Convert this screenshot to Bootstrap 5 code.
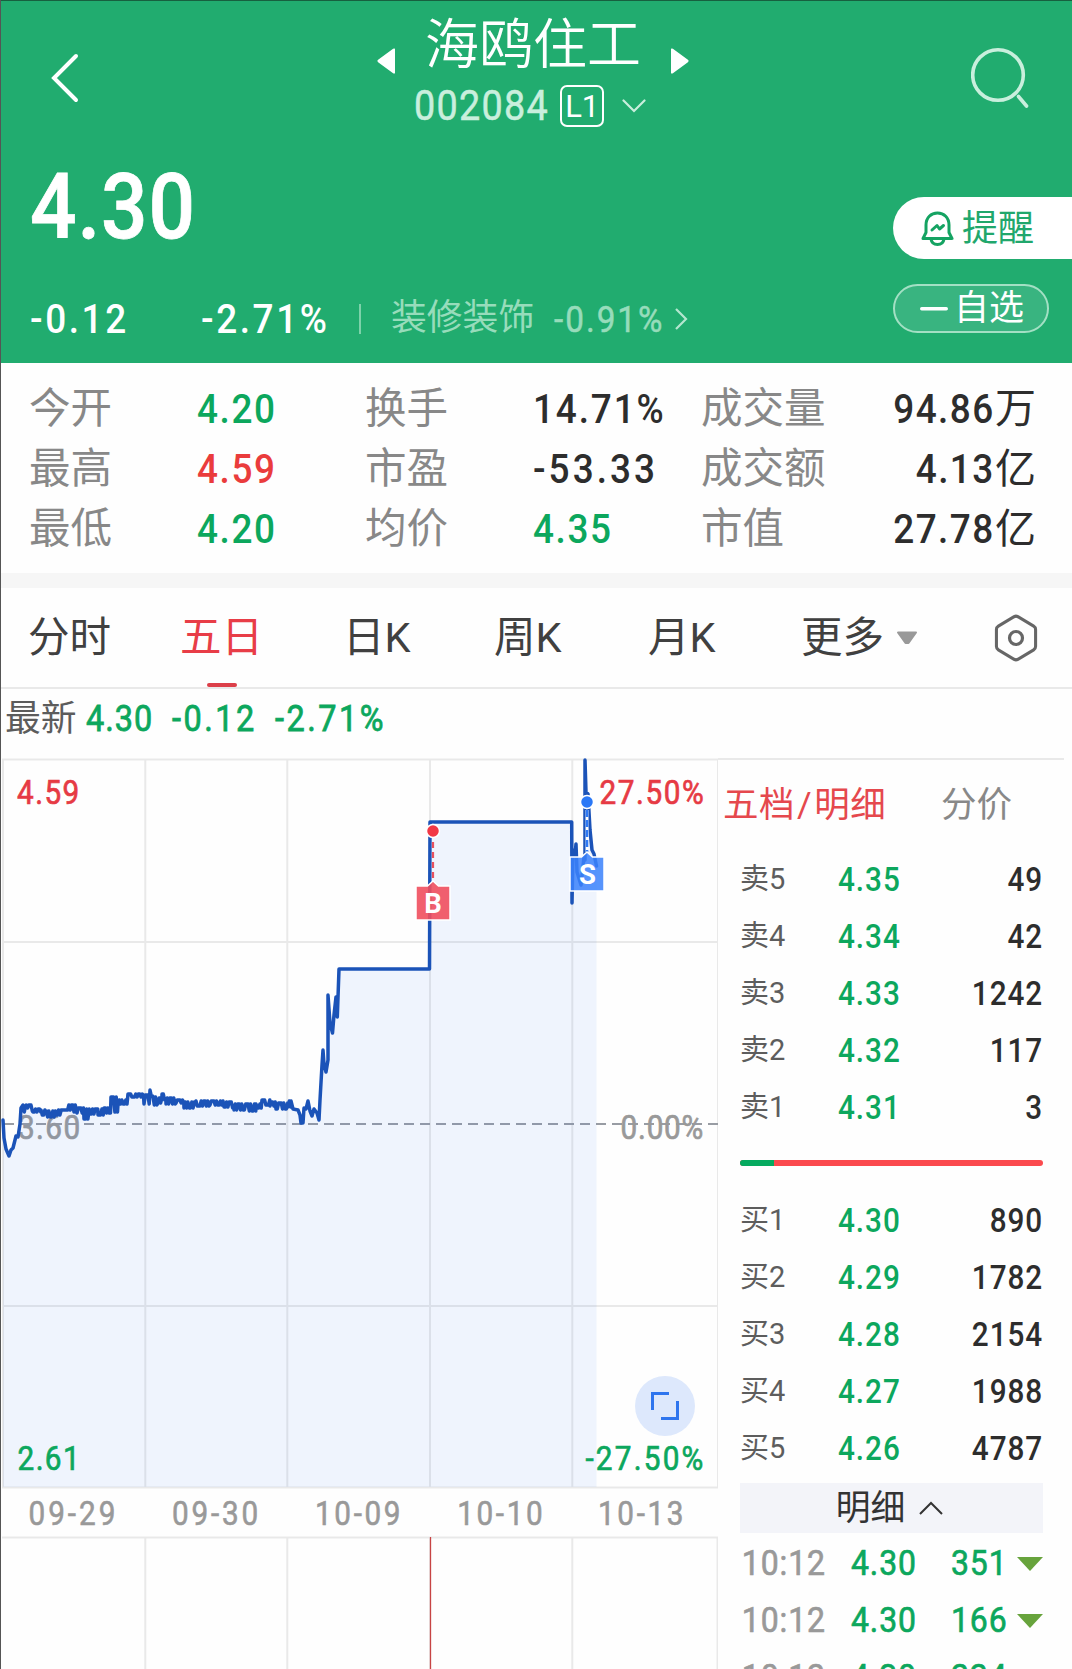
<!DOCTYPE html>
<html lang="zh-CN">
<head>
<meta charset="utf-8">
<meta name="viewport" content="width=device-width, initial-scale=1">
<title>海鸥住工 002084</title>
<link href="https://cdn.jsdelivr.net/npm/bootstrap@5.3.0/dist/css/bootstrap.min.css" rel="stylesheet">
<style>
  html, body { overflow: hidden; }
  body { width: 1072px; height: 1669px; background: #fefefe; color: #2d2d2d; line-height: 1;
         font-family: Roboto, "Noto Sans CJK SC", sans-serif; }
  svg { display: block; flex: none; }
  .screen { height: 1669px; border-left: 1px solid #555; overflow: hidden; }
  /* condensed figures */
  .num { display: inline-block; font-weight: 500; transform: scaleX(.9); transform-origin: left center; white-space: nowrap; }
  .num-end { transform-origin: right center; }
  .up { color: #ea3c3c; }
  .down { color: #0ca75d; }

  .quote-head { height: 363px; background: #21ac6f; border-top: 1px solid #17603f; color: #fff; margin-left: -1px; border-left: 1px solid #17603f; }
  .topbar { height: 164px; padding: 0 41px 0 50px; }
  .stock-title { font-size: 54px; font-weight: 350; line-height: 54px; margin: 0 30px; }
  .stock-code { font-size: 42px; letter-spacing: 1.4px; color: #c9efdd; font-weight: 400; -webkit-text-stroke: .5px #c9efdd; margin-right: -15px; }
  .level-tag { width: 44px; height: 42px; border: 2px solid #fff; border-radius: 7px; font-size: 31px; letter-spacing: -.3px; margin-left: 11px; }
  .last-price { font-size: 91px; letter-spacing: 1px; height: 84px; }
  .last-price .num { -webkit-text-stroke: .8px #fff; }
  .delta-line { height: 86px; margin-top: 27px; }
  .delta { font-size: 41px; letter-spacing: 2.9px; }
  .sector { font-size: 35.8px; color: #97dcbb; }
  .sector.num { font-size: 37px; font-weight: 400; letter-spacing: 2.2px; -webkit-text-stroke: .5px #97dcbb; }
  .pill-alert { width: 179px; height: 62px; background: #fff; color: #21a76c; border-radius: 31px 0 0 31px; font-size: 36px; padding-left: 28px; gap: 8px; }
  .pill-fav { width: 156px; height: 49px; background: #39b480; border: 2px solid #a3e0c4; border-radius: 25px; font-size: 35px; padding-left: 25px; gap: 6px; margin-top: 25px; }

  .stats { height: 210px; padding-top: 16px; }
  .stat-line { height: 60px; font-size: 41.5px; padding: 0 36px 0 28px; }
  .stat-line .num { font-size: 41px; letter-spacing: 1.8px; }
  .stat-line .wide { letter-spacing: 2.1px; }
  .stat-line .wider { letter-spacing: 3.4px; }
  .stat-line .num-end { letter-spacing: 1.6px; }
  .k { color: #888; }
  .unit { font-size: 41px; }
  .stat-col { width: 168px; flex: none; }
  .strip { height: 15px; background: #f6f6f6; }

  .period { height: 101px; border-bottom: 2px solid #e9e9e9; font-size: 41.5px; color: #404040; }
  .period > div { height: 99px; position: relative; padding-top: 1px; }
  .period .on { color: #e83d47; }
  .period .on::after { content: ""; position: absolute; left: 27px; bottom: 0; width: 30px; height: 4px; border-radius: 2px; background: #dc3f49; }
  .latest { height: 69px; padding: 0 0 9px 4px; font-size: 35.8px; color: #5c5c5c; }
  .latest .num { font-size: 36px; font-weight: 400; -webkit-text-stroke: .8px #0ca75d; letter-spacing: 1.1px; }
  .latest .wider { letter-spacing: 2.8px; }

  .book { width: 346px; padding-left: 11px; border-top: 2px solid #e9e9e9; }
  .book-tabs { height: 91px; font-size: 35.5px; }
  .depth { height: 57px; width: 303px; margin-left: 11px; }
  .side { width: 98px; font-size: 29px; color: #5d5d5d; }
  .px { width: 90px; font-size: 33px; letter-spacing: 1.1px; }
  .vol { flex: 1; text-align: right; font-size: 33px; letter-spacing: 1px; }
  .ratio { height: 6px; width: 303px; margin: 24px 0 26px 11px; border-radius: 3px; background: #fb4a4e; }
  .ratio > div { height: 6px; background: #05aa5f; }
  .detail-btn { height: 50px; width: 303px; margin: 6px 0 0 11px; padding-right: 4px; background: #f3f4f9; font-size: 34.8px; color: #333; gap: 14px; }
  .tick { height: 57px; width: 303px; margin-left: 11px; font-size: 35.5px; }
  .tick .num { font-weight: 400; -webkit-text-stroke: .7px currentColor; letter-spacing: 1px; }
  .tick-time { color: #999; width: 111px; padding-left: 2px; }
</style>
</head>
<body>
<main class="screen d-flex flex-column">

  <header class="quote-head d-flex flex-column flex-shrink-0">
    <div class="topbar d-flex justify-content-between align-items-start flex-shrink-0">
      <svg width="30" height="50" viewBox="0 0 30 50" style="margin-top:52px"><path d="M25 3 3 25 25 47" fill="none" stroke="#fff" stroke-width="4" stroke-linecap="round"/></svg>
      <div class="d-flex flex-column align-items-center" style="padding-top:17px;margin-left:14px">
        <div class="d-flex align-items-center">
          <svg width="18" height="26" viewBox="0 0 18 26" style="margin-top:30px"><path d="M17 2v22L2 13z" fill="#fff" stroke="#fff" stroke-width="3" stroke-linejoin="round"/></svg>
          <div class="stock-title">海鸥住工</div>
          <svg width="18" height="26" viewBox="0 0 18 26" style="margin-top:30px"><path d="M1 2v22l15-11z" fill="#fff" stroke="#fff" stroke-width="3" stroke-linejoin="round"/></svg>
        </div>
        <div class="d-flex align-items-center" style="margin-top:11px;margin-right:6px">
          <span class="stock-code num">002084</span>
          <span class="level-tag d-flex align-items-center justify-content-center">L1</span>
          <svg width="24" height="14" viewBox="0 0 24 14" style="margin-left:18px"><path d="M1.500 1.500 12 12 22.500 1.500" fill="none" stroke="#c9efdd" stroke-width="2.200" stroke-linecap="round"/></svg>
        </div>
      </div>
      <svg width="60" height="62" viewBox="0 0 60 62" style="margin-top:46px"><g fill="none" stroke="#c9efdd" stroke-width="3.600" stroke-linecap="round"><circle cx="27" cy="28" r="25.300"/><path d="m47.500 49.500 8 9.500"/></g></svg>
    </div>
    <div class="d-flex justify-content-between">
      <div class="d-flex flex-column" style="padding-left:29px">
        <div class="d-flex align-items-center last-price"><span class="num">4.30</span></div>
        <div class="d-flex align-items-center delta-line">
          <span class="delta num" style="width:171px">-0.12</span>
          <span class="delta num" style="width:158px">-2.71%</span>
          <svg width="2" height="30"><rect width="2" height="30" fill="#7dd2aa"/></svg>
          <span class="sector" style="margin-left:30px;width:163px">装修装饰</span>
          <span class="sector num" style="width:120px">-0.91%</span>
          <svg width="14" height="24" viewBox="0 0 14 24"><path d="m2 2 10 10L2 22" fill="none" stroke="#b4e6cf" stroke-width="2.200"/></svg>
        </div>
      </div>
      <div style="padding-top:32px">
        <div class="pill-alert d-flex align-items-center">
          <svg width="33" height="35" viewBox="0 0 33 35"><g fill="none" stroke="#15a362" stroke-width="3" stroke-linecap="round" stroke-linejoin="round"><path d="M2 27.500 5 21.500V14C5 6.500 10 2 16.500 2S28 6.500 28 14v7.500l3 6Z"/><path d="M10 28c.5 3.500 3 5.500 6.500 5.500S22.500 31.500 23 28"/><path d="m11 19 5-4.500 2.500 3.500 4-3.500"/></g></svg>
          <span style="padding-top:1px">提醒</span>
        </div>
        <div class="pill-fav d-flex align-items-center">
          <svg width="28" height="4"><rect width="28" height="3.400" rx="1.700" fill="#fff"/></svg>
          <span>自选</span>
        </div>
      </div>
    </div>
  </header>

  <section class="stats flex-shrink-0">
    <div class="stat-line d-flex align-items-center"><span class="k stat-col">今开</span><span class="num stat-col down">4.20</span><span class="k stat-col">换手</span><span class="num stat-col wide">14.71%</span><span class="k stat-col">成交量</span><span class="ms-auto num num-end">94.86</span><span class="unit">万</span></div>
    <div class="stat-line d-flex align-items-center"><span class="k stat-col">最高</span><span class="num stat-col up">4.59</span><span class="k stat-col">市盈</span><span class="num stat-col wider">-53.33</span><span class="k stat-col">成交额</span><span class="ms-auto num num-end">4.13</span><span class="unit">亿</span></div>
    <div class="stat-line d-flex align-items-center"><span class="k stat-col">最低</span><span class="num stat-col down">4.20</span><span class="k stat-col">均价</span><span class="num stat-col down">4.35</span><span class="k stat-col">市值</span><span class="ms-auto num num-end">27.78</span><span class="unit">亿</span></div>
  </section>
  <div class="strip flex-shrink-0"></div>

  <nav class="period d-flex flex-shrink-0">
    <div class="d-flex align-items-center" style="margin-left:27px;width:152px">分时</div>
    <div class="d-flex align-items-center on" style="width:163px">五日</div>
    <div class="d-flex align-items-center" style="width:151px">日K</div>
    <div class="d-flex align-items-center" style="width:154px">周K</div>
    <div class="d-flex align-items-center" style="width:153px">月K</div>
    <div class="d-flex align-items-center" style="width:193px">更多<svg width="22" height="14" viewBox="0 0 22 14" style="margin-left:12px"><path d="M2 1.500h18L12.500 12h-3z" fill="#999" stroke="#999" stroke-width="2" stroke-linejoin="round"/></svg></div>
    <div class="d-flex align-items-center"><svg width="44" height="48" viewBox="0 0 44 48"><g fill="none" stroke="#666" stroke-width="3.200"><path d="M20 2.700q2-1 4 0l16.500 9.500q2 1.200 2 3.300v17q0 2.100-2 3.300L24 45.300q-2 1-4 0L3.500 35.800q-2-1.200-2-3.300v-17q0-2.100 2-3.300Z" transform="translate(1 0) scale(.955 1)"/><circle cx="22" cy="24" r="6.500"/></g></svg></div>
  </nav>

  <div class="latest d-flex align-items-center flex-shrink-0">
    <span style="width:81px;padding-top:2px">最新</span>
    <span class="num down" style="width:86px">4.30</span>
    <span class="num down wider" style="width:103px">-0.12</span>
    <span class="num down wider">-2.71%</span>
  </div>

  <div class="d-flex">
    <!-- five-day trend, price range 2.61 to 4.59, with the volume pane below -->
    <svg width="717" height="912" viewBox="1 758 717 912" font-family="Roboto">
      <g stroke="#e9e9e9" stroke-width="2" fill="none">
        <path d="M2 759.500H718M2 942H718M2 1306H718M2 1487.500H718M3 759V1488M145.300 759V1487M287.300 759V1487M430 759V1487M572.300 759V1487M718 759V1488"/>
        <path d="M2 1537.500H718M145.300 1537V1669M287.300 1537V1669M430 1537V1669M572.300 1537V1669M717.500 1537V1669"/>
      </g>
      <path d="M430.500 1537V1669" stroke="#c74444" stroke-width="1.300"/>
      <path d="M4 1124H718" stroke="#989ca3" stroke-width="1.800" stroke-dasharray="10 6"/>
      <g transform="scale(.9 1)" fill="#999" stroke="#999" stroke-width=".7" font-size="33">
        <text x="20" y="1139" textLength="69">3.60</text>
        <text x="689.500" y="1139" textLength="92">0.00%</text>
      </g>
      <path id="fillArea" fill="#3c82f0" fill-opacity=".08"/>
      <path id="trend" fill="none" stroke="#1b53b8" stroke-width="3.500" stroke-linejoin="round" stroke-linecap="round"/>
      <g transform="scale(.9 1)" font-size="33" stroke-width=".7">
        <text x="19" y="804" textLength="69" fill="#e63a44" stroke="#e63a44">4.59</text>
        <text x="666" y="804" textLength="116" fill="#e63a44" stroke="#e63a44">27.50%</text>
        <text x="19.500" y="1470" textLength="69" fill="#0ca75d" stroke="#0ca75d">2.61</text>
        <text x="650.500" y="1470" textLength="131" fill="#0ca75d" stroke="#0ca75d">-27.50%</text>
      </g>
      <g transform="scale(.9 1)" font-size="33" fill="#999" stroke="#999" stroke-width=".6">
        <text x="31.700" y="1525" textLength="96.500">09-29</text><text x="191" y="1525" textLength="96">09-30</text><text x="350" y="1525" textLength="95">10-09</text><text x="508" y="1525" textLength="95">10-10</text><text x="664.500" y="1525" textLength="95">10-13</text>
      </g>
      <circle cx="665" cy="1406" r="30" fill="#dde8fc"/>
      <path d="M652.500 1410V1393.500H669M661 1418.500H677.500V1401" fill="none" stroke="#2e75ee" stroke-width="3"/>
      <path d="M433 842V881" stroke="#e8505e" stroke-width="2.200" stroke-dasharray="6 4"/>
      <circle cx="433" cy="831" r="6.500" fill="#f23845" stroke="#fff" stroke-width="1.500"/>
      <path d="M416 886H427.500L433 881 438.500 886H450V920H416Z" fill="#f04f5e" fill-opacity=".9" stroke="#fff" stroke-width="1.500"/>
      <path d="M587 810V852" stroke="#fff" stroke-width="3"/>
      <path d="M587 810V852" stroke="#2f7af5" stroke-width="2.600" stroke-dasharray="7 3"/>
      <circle cx="587" cy="802" r="6.500" fill="#2a78f6" stroke="#fff" stroke-width="1.500"/>
      <path d="M570 857H581.500L587 852 592.500 857H604V891H570Z" fill="#3b82fb" fill-opacity=".86" stroke="#fff" stroke-width="1.500"/>
      <g font-size="27.500" font-weight="700" fill="#fff" text-anchor="middle"><text x="433" y="913">B</text><text x="587.500" y="884">S</text></g>
    </svg>

    <aside class="book d-flex flex-column">
      <div class="book-tabs d-flex align-items-center"><span style="color:#e5484d;margin-left:-6px;width:218px;letter-spacing:.5px" class="text-nowrap">五档<span style="padding:0 2px">/</span>明细</span><span class="k">分价</span></div>
      <div>
        <div class="depth d-flex align-items-center"><span class="side">卖5</span><span class="px num down">4.35</span><span class="vol num num-end">49</span></div>
        <div class="depth d-flex align-items-center"><span class="side">卖4</span><span class="px num down">4.34</span><span class="vol num num-end">42</span></div>
        <div class="depth d-flex align-items-center"><span class="side">卖3</span><span class="px num down">4.33</span><span class="vol num num-end">1242</span></div>
        <div class="depth d-flex align-items-center"><span class="side">卖2</span><span class="px num down">4.32</span><span class="vol num num-end">117</span></div>
        <div class="depth d-flex align-items-center"><span class="side">卖1</span><span class="px num down">4.31</span><span class="vol num num-end">3</span></div>
      </div>
      <div class="ratio overflow-hidden"><div style="width:11.3%"></div></div>
      <div>
        <div class="depth d-flex align-items-center"><span class="side">买1</span><span class="px num down">4.30</span><span class="vol num num-end">890</span></div>
        <div class="depth d-flex align-items-center"><span class="side">买2</span><span class="px num down">4.29</span><span class="vol num num-end">1782</span></div>
        <div class="depth d-flex align-items-center"><span class="side">买3</span><span class="px num down">4.28</span><span class="vol num num-end">2154</span></div>
        <div class="depth d-flex align-items-center"><span class="side">买4</span><span class="px num down">4.27</span><span class="vol num num-end">1988</span></div>
        <div class="depth d-flex align-items-center"><span class="side">买5</span><span class="px num down">4.26</span><span class="vol num num-end">4787</span></div>
      </div>
      <div class="detail-btn d-flex align-items-center justify-content-center"><span>明细</span><svg width="24" height="14" viewBox="0 0 24 14"><path d="M1 13 12 2 23 13" fill="none" stroke="#333" stroke-width="2"/></svg></div>
      <div style="padding-top:2px">
        <div class="tick d-flex align-items-center"><span class="num tick-time">10:12</span><span class="num down" style="width:100px">4.30</span><span class="num down" style="width:66px">351</span><svg width="26" height="14"><path d="M0 0H26L13 14Z" fill="#67a33c"/></svg></div>
        <div class="tick d-flex align-items-center"><span class="num tick-time">10:12</span><span class="num down" style="width:100px">4.30</span><span class="num down" style="width:66px">166</span><svg width="26" height="14"><path d="M0 0H26L13 14Z" fill="#67a33c"/></svg></div>
        <div class="tick d-flex align-items-center"><span class="num tick-time">10:12</span><span class="num down" style="width:100px">4.30</span><span class="num down" style="width:66px">224</span></div>
      </div>
    </aside>
  </div>
</main>
<script src="https://cdn.jsdelivr.net/npm/bootstrap@5.3.0/dist/js/bootstrap.bundle.min.js"></script>
<script>
  // Flat stretches move between two neighbouring price ticks: [x, upper y, lower y].
  const flat = [[23,1105,1112],[25,1105,1108],[31,1105,1111],[33,1109,1112],[41,1110,1115],[45,1111,1117],[56,1110,1115],[65,1105,1110],[74,1105,1112],[77,1108,1113],[84,1109,1119],[90,1109,1114],[98,1109,1115],[104,1108,1113],[111,1097,1112],[118,1100,1104],[127,1094,1104],[128,1094,1097],[144,1095,1104],[150,1090,1096],[153,1097,1105],[158,1098,1103],[162,1094,1100],[166,1098,1104],[176,1100,1103],[184,1102,1108],[196,1101,1106],[210,1101,1105],[224,1102,1107],[230,1102,1108],[234,1104,1110],[248,1104,1111],[256,1104,1108],[262,1100,1105],[270,1102,1106],[276,1103,1109],[288,1101,1107]];
  const pts = [[3,1120],[4,1138],[6,1149],[9,1156],[11,1150],[13,1148],[15,1140],[16,1136],[18,1137],[20,1124],[21,1108]];
  const side = "0110100011101001011000101101";
  let n = 0;
  flat.forEach((f, i) => {
    const end = i + 1 < flat.length ? flat[i + 1][0] : 291;
    for (let x = f[0]; x < end; x += 1.3) pts.push([x, side[n++ % side.length] === "1" ? f[2] : f[1]]);
  });
  pts.push([291,1101],[293,1109],[298,1110],[300,1115],[301,1123],[303,1123],[304,1108],[306,1109],[308,1101],[310,1111],[312,1116],[314,1109],[317,1113],[319,1120],[320,1100],[322,1065],[323,1050],[324,1064],[326,1072],[328,1060],[328,995],[330,1023],[332.5,1033],[334,1015],[336,997],[337.3,1017],[339,969],[429.500,969],[430,822],[571.700,822],[572,903],[573,850],[575,856],[576,844],[577,872],[581,885],[584,857],[585,860],[585,760],[586,792],[588,794],[590,830],[592,850],[594,854],[596.500,866]);
  const line = pts.map(p => p.join(" ")).join("L");
  document.getElementById("trend").setAttribute("d", "M" + line);
  document.getElementById("fillArea").setAttribute("d", "M" + line + "V1487H3Z");
</script>
</body>
</html>
